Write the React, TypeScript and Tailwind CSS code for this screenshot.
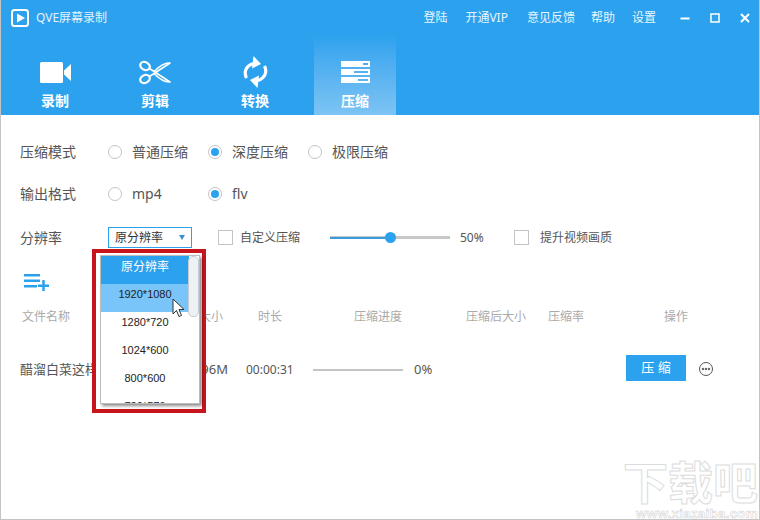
const font = "font-['Noto_Sans','Noto_Sans_CJK_SC',sans-serif]";

const Radio = ({ on, label }: { on?: boolean; label: string }) => (
  <div className="flex w-[100px] items-center gap-[10px]">
    <span className="flex h-[14px] w-[14px] items-center justify-center rounded-full border border-[#c4c4c4] bg-white">
      {on && <span className="h-[8px] w-[8px] rounded-full bg-[#2ca2ee]" />}
    </span>
    <span>{label}</span>
  </div>
);

const VideoIcon = () => (
  <svg width="31" height="21" viewBox="0 0 31 21" fill="white">
    <rect x="0" y="0" width="23" height="21" rx="1.500" />
    <path d="M24 8.500 L31 2 V19 L24 12.500 Z" />
  </svg>
);

const ScissorsIcon = () => (
  <svg width="32" height="25" viewBox="0 0 32 25" fill="none" stroke="white" strokeWidth="2.200">
    <ellipse cx="6" cy="6" rx="5" ry="3.800" transform="rotate(28 6 6)" />
    <ellipse cx="6" cy="19" rx="5" ry="3.800" transform="rotate(-28 6 19)" />
    <path d="M10.500 8.500 L31 22 C26 22.500 22 20.500 15 13.500" strokeWidth="1.600" strokeLinejoin="round" />
    <path d="M10.500 16.500 L31 3 C26 2.500 22 4.500 15 11.500" strokeWidth="1.600" strokeLinejoin="round" />
  </svg>
);

const RefreshIcon = () => (
  <svg width="25" height="32" viewBox="0 0 25 32" fill="none" stroke="white" strokeWidth="3.200">
    <path d="M3.500 22 C0.500 16 3 10 10 7.500" />
    <path d="M21.500 10 C24.500 16 22 22 15 24.500" />
    <path d="M10.500 0 L18 8 L9 12.500 Z" fill="white" stroke="none" />
    <path d="M14.500 32 L7 24 L16 19.500 Z" fill="white" stroke="none" />
  </svg>
);

const ServerIcon = () => (
  <svg width="29" height="22" viewBox="0 0 29 22" fill="white">
    <path fillRule="evenodd" d="M0 0 H29 V6 H0 Z M22 2 V4 H27 V2 Z" />
    <path fillRule="evenodd" d="M0 8 H29 V14 H0 Z M13 10 V12 H27 V10 Z" />
    <path fillRule="evenodd" d="M0 16 H29 V22 H0 Z M17 18 V20 H27 V18 Z" />
  </svg>
);

const tabs = [
  { name: "录制", Icon: VideoIcon },
  { name: "剪辑", Icon: ScissorsIcon },
  { name: "转换", Icon: RefreshIcon },
  { name: "压缩", Icon: ServerIcon, active: true },
];

const resolutions = ["1280*720", "1024*600", "800*600", "720*576"];

export default function App() {
  return (
    <div className={`${font} relative h-[520px] w-[760px] overflow-hidden border-x border-b border-[#c4c4c4] bg-white text-[14px] text-[#555]`}>
      {/* Header */}
      <header className="mx-[-1px] h-[115px] bg-[#2ca2ee] text-white">
        <div className="flex h-[36px] items-center pl-[11px] pr-[10px]">
          <svg width="18" height="18" viewBox="0 0 18 18" className="mr-[7px]">
            <rect x="1" y="1" width="16" height="16" rx="2.500" fill="#2ca2ee" stroke="white" strokeWidth="2" />
            <path d="M6 4.500 L14 9 L6 13.500 Z" fill="white" />
          </svg>
          <span className="text-[12px] text-[#e3f2fd]">QVE屏幕录制</span>
          <nav className="ml-auto flex items-center text-[12px] text-[#e8f5fe]">
            <span className="mr-[18px]">登陆</span>
            <span className="mr-[19px]">开通VIP</span>
            <span className="mr-[16px]">意见反馈</span>
            <span className="mr-[17px]">帮助</span>
            <span>设置</span>
          </nav>
          <div className="ml-[24px] flex items-center gap-[20px]">
            <svg width="10" height="10" viewBox="0 0 10 10" fill="white">
              <rect x="0.500" y="4.500" width="9" height="2" />
            </svg>
            <svg width="10" height="10" viewBox="0 0 10 10" fill="none" stroke="white" strokeWidth="1.500">
              <rect x="1" y="1" width="8" height="8" />
            </svg>
            <svg width="10" height="10" viewBox="0 0 10 10" fill="none" stroke="white" strokeWidth="2">
              <path d="M1 1 L9 9 M9 1 L1 9" />
            </svg>
          </div>
        </div>
        <div className="flex h-[79px] gap-[18px] pl-[14px]">
          {tabs.map(({ name, Icon, active }) => (
            <div
              key={name}
              className={`flex w-[82px] flex-col items-center ${active ? "bg-gradient-to-b from-[#2ca2ee] to-[#7cc4f4]" : ""}`}
            >
              <div className="flex h-[56px] items-center pt-[16px]">
                <Icon />
              </div>
              <span className="text-[14px] font-bold leading-[17px]">{name}</span>
            </div>
          ))}
        </div>
      </header>

      {/* Options */}
      <section className="flex flex-col gap-[23px] pl-[19px] pt-[27px]">
        <div className="flex h-[19px] items-center">
          <span className="w-[88px]">压缩模式</span>
          <Radio label="普通压缩" />
          <Radio on label="深度压缩" />
          <Radio label="极限压缩" />
        </div>
        <div className="flex h-[19px] items-center">
          <span className="w-[88px]">输出格式</span>
          <Radio label="mp4" />
          <Radio on label="flv" />
        </div>
        <div className="mt-[1px] flex h-[21px] items-center">
          <span className="w-[88px]">分辨率</span>
          <div className="flex h-[21px] w-[84px] items-center justify-between border border-[#2ca2ee] px-[6px] text-[12px] text-[#333]">
            <span>原分辨率</span>
            <span className="h-0 w-0 border-x-[3.500px] border-t-[5px] border-x-transparent border-t-[#3a8fc8]" />
          </div>
          <div className="ml-[26px] flex w-[112px] items-center gap-[7px] text-[12px]">
            <span className="h-[15px] w-[15px] border border-[#c4c4c4]" />
            <span>自定义压缩</span>
          </div>
          <div className="flex h-[3px] w-[120px] items-center bg-[#c8c8c8]">
            <div className="h-[2px] w-[55px] bg-[#3a9bdc]" />
            <span className="h-[11px] w-[11px] rounded-full bg-[#2ca2ee]" />
          </div>
          <span className="ml-[10px] w-[54px] text-[12px]">50%</span>
          <div className="flex items-center gap-[11px] text-[12px]">
            <span className="h-[15px] w-[15px] border border-[#c4c4c4]" />
            <span>提升视频画质</span>
          </div>
        </div>
      </section>

      {/* File list */}
      <section className="mt-[26px] pl-[23px]">
        <svg width="25" height="17" viewBox="0 0 25 17" fill="#2ca2ee" className="block">
          <rect x="0" y="0" width="16" height="2.500" />
          <rect x="0" y="5.500" width="16" height="2.500" />
          <rect x="0" y="11" width="13" height="2.500" />
          <rect x="14" y="10.500" width="11" height="2.500" />
          <rect x="18.250" y="6" width="2.500" height="11" />
        </svg>
      </section>
      <div className="mt-[16px] flex h-[20px] items-center pl-[21px] text-[12px] text-[#aaa]">
        <span className="w-[177px]">文件名称</span>
        <span className="w-[59px]">大小</span>
        <span className="w-[96px]">时长</span>
        <span className="w-[112px]">压缩进度</span>
        <span className="w-[82px]">压缩后大小</span>
        <span className="w-[116px]">压缩率</span>
        <span>操作</span>
      </div>
      <div className="mt-[28px] flex h-[26px] items-center pl-[19px] text-[13px]">
        <span className="w-[160px] truncate pt-[3px]">醋溜白菜这样做.mp4</span>
        <span className="w-[48px] pt-[3px] text-right">1.96M</span>
        <span className="ml-[18px] w-[67px] pt-[3px] text-[12px]">00:00:31</span>
        <span className="mt-[3px] h-[2px] w-[90px] bg-[#c4c4c4]" />
        <span className="ml-[11px] w-[212px] pt-[3px]">0%</span>
        <button className="h-[26px] w-[60px] bg-[#2ca2ee] text-[13px] text-white">压 缩</button>
        <svg width="16" height="16" viewBox="0 0 16 16" className="ml-[12px] mt-[2px]" fill="none" stroke="#555">
          <circle cx="8" cy="8" r="6.500" />
          <circle cx="5" cy="8" r="0.800" fill="#555" />
          <circle cx="8" cy="8" r="0.800" fill="#555" />
          <circle cx="11" cy="8" r="0.800" fill="#555" />
        </svg>
      </div>

      {/* Dropdown open over the table, with the red marker round it */}
      <div className="absolute left-[91px] top-[249px] h-[164px] w-[114px] border-[4px] border-[#c8141c] bg-white pl-[4px] pt-[2px]">
        <div className="relative h-[149px] w-[100px] overflow-hidden border border-[#bbb] bg-white text-center text-[12px] text-[#222] shadow-[2px_2px_3px_rgba(0,0,0,0.45)]">
          <div className="flex h-[28px] w-[88px] items-center justify-center bg-[#2ca2ee] pb-[6px] text-white">原分辨率</div>
          <div className="flex h-[28px] w-[88px] items-center justify-center bg-[#79c4f8] pb-[8px] font-['Liberation_Sans',sans-serif] text-[11px]">1920*1080</div>
          {resolutions.map((r) => (
            <div key={r} className="flex h-[28px] w-[88px] items-center justify-center pb-[8px] font-['Liberation_Sans',sans-serif] text-[11px]">{r}</div>
          ))}
          <div className="absolute right-0 top-0 h-[61px] w-[11px] rounded-[5px] border border-[#c4ccd4] bg-[#eef1f4]" />
        </div>
      </div>

      {/* Cursor */}
      <svg width="14" height="20" viewBox="0 0 14 20" className="absolute left-[171px] top-[298px]">
        <path d="M1 1 V16 L4.500 12.500 L7 18.500 L9.500 17.500 L7 11.500 H12 Z" fill="white" stroke="#333" strokeWidth="1" />
      </svg>

      {/* Watermark */}
      <div className="absolute right-[1px] top-[458px] flex flex-col items-end text-white">
        <span className="text-[45px] font-bold leading-[50px] [-webkit-text-stroke:1px_#dcdcdc]">下载吧</span>
        <span className="font-['Liberation_Sans',sans-serif] text-[13.500px] font-bold leading-[11px] tracking-[0.200px] [-webkit-text-stroke:0.5px_#cfcfcf]">www.xiazaiba.com</span>
      </div>
    </div>
  );
}
